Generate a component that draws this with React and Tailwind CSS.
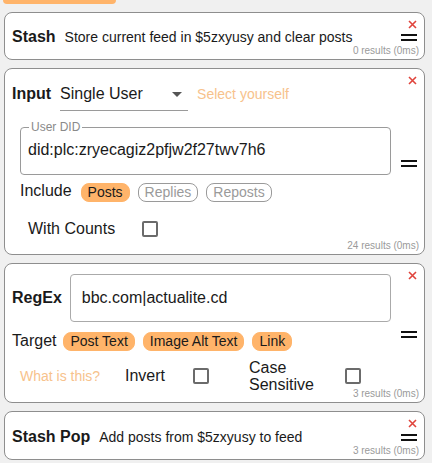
const font = { fontFamily: '"Liberation Sans", Arial, sans-serif' }

function Handle() {
  return (
    <div className="ml-[10px] mt-[3px] flex w-4 shrink-0 flex-col gap-[3px]">
      <div className="h-[2px] bg-[#111]" />
      <div className="h-[2px] bg-[#111]" />
    </div>
  )
}

function Close() {
  return (
    <svg className="absolute right-[7px] top-[7px]" width="9" height="9" viewBox="0 0 9 9">
      <path d="M1 1 L8 8 M8 1 L1 8" stroke="#e0443c" strokeWidth="1.6" />
    </svg>
  )
}

function Card({ children, results, className = '' }) {
  return (
    <div className={`relative ml-[4px] mr-[7px] flex items-center rounded-lg border border-[#8e8e8e] bg-white pl-[7px] pr-[7px] ${className}`}>
      <div className="min-w-0 flex-1">{children}</div>
      <Handle />
      <Close />
      <span className="absolute bottom-[2px] right-[5px] text-[10px] leading-[12px] text-[#9a9a9a]">{results}</span>
    </div>
  )
}

function Chip({ label, on }) {
  return (
    <span
      className={`rounded-lg border px-[6px] text-sm leading-[17px] ${
        on ? 'border-[#ffb46a] bg-[#ffb46a] text-[#1a1a1a]' : 'border-[#9a9a9a] bg-white text-[#9a9a9a]'
      }`}
    >
      {label}
    </span>
  )
}

function Checkbox() {
  return <span className="block h-4 w-4 shrink-0 rounded-[2px] border-2 border-[#6b6b6b] bg-white" />
}

export default function App() {
  return (
    <div className="min-h-screen bg-[#f0f0f0] text-[#1a1a1a]" style={font}>
      <div className="ml-[3px] h-[4px] w-[113px] rounded-b-lg bg-[#ffb46a]" />

      <div className="mt-[8px] flex flex-col gap-[8px]">
        <Card results="0 results (0ms)" className="h-[48px]">
          <div className="flex items-baseline gap-[9px] pt-[2px]">
            <span className="text-base font-bold">Stash</span>
            <span className="text-sm">Store current feed in $5zxyusy and clear posts</span>
          </div>
        </Card>

        <Card results="24 results (0ms)" className="h-[187px]">
          <div className="flex flex-col pb-[3px]">
            <div className="flex items-start gap-[9px]">
              <span className="text-base font-bold leading-6">Input</span>
              <div className="flex w-[128px] items-center justify-between border-b border-[#9a9a9a] pb-[4px] pr-[6px]">
                <span className="text-base leading-6">Single User</span>
                <svg width="10" height="5" viewBox="0 0 10 5">
                  <path d="M0 0 L10 0 L5 5 Z" fill="#555" />
                </svg>
              </div>
              <span className="text-sm leading-6 text-[#f7c28c]">Select yourself</span>
            </div>

            <fieldset className="ml-2 mt-[9px] rounded border border-[#9a9a9a] px-[7px] pb-[12px]">
              <legend className="ml-[1px] px-[2px] text-xs leading-[14px] text-[#8a8a8a]">User DID</legend>
              <div className="mt-[4px] text-base leading-6">did:plc:zryecagiz2pfjw2f27twv7h6</div>
            </fieldset>

            <div className="ml-2 mt-[7px] flex items-center gap-2">
              <span className="mb-[3px] mr-[1px] text-base leading-[18px]">Include</span>
              <Chip label="Posts" on />
              <Chip label="Replies" />
              <Chip label="Reposts" />
            </div>

            <div className="ml-4 mt-[17px] flex items-center gap-[27px]">
              <span className="text-base leading-[18px]">With Counts</span>
              <Checkbox />
            </div>
          </div>
        </Card>

        <Card results="3 results (0ms)" className="h-[140px]">
          <div className="flex flex-col">
            <div className="flex items-center gap-2">
              <span className="text-base font-bold">RegEx</span>
              <div className="flex h-[48px] flex-1 items-center rounded border border-[#aaaaaa] px-[11px] text-base">
                bbc.com|actualite.cd
              </div>
            </div>

            <div className="mt-[10px] flex items-center gap-2">
              <span className="mb-[2px] mr-[-1px] text-base leading-[18px]">Target</span>
              <Chip label="Post Text" on />
              <Chip label="Image Alt Text" on />
              <Chip label="Link" on />
            </div>

            <div className="ml-2 mt-[7px] flex items-center">
              <span className="w-[105px] text-sm text-[#f7c28c]">What is this?</span>
              <span className="w-[68px] text-base">Invert</span>
              <Checkbox />
              <span className="ml-[40px] w-[96px] text-base leading-[17px]">Case Sensitive</span>
              <Checkbox />
            </div>
          </div>
        </Card>

        <Card results="3 results (0ms)" className="h-[49px]">
          <div className="flex items-baseline gap-[9px] pt-[2px]">
            <span className="text-base font-bold">Stash Pop</span>
            <span className="text-sm">Add posts from $5zxyusy to feed</span>
          </div>
        </Card>
      </div>
    </div>
  )
}
